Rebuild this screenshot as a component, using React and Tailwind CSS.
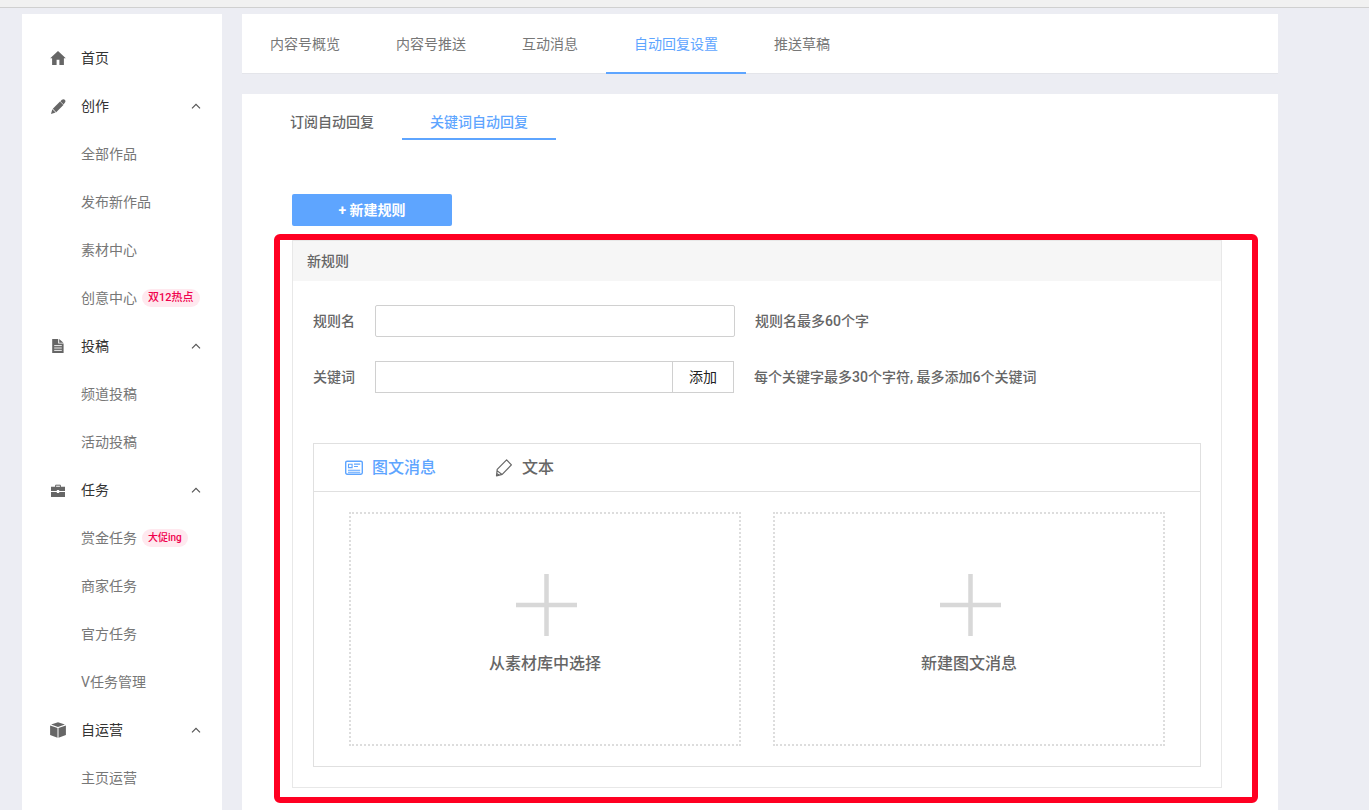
import { useState } from 'react';
import clsx from 'clsx';

const HomeIcon = () => (
  <svg viewBox="0 0 16 16" className="w-4 h-4" fill="currentColor" aria-hidden="true">
    <path d="M8 1.1 0.2 8.3h1.9V15H6.6V9.8h2.8V15h4.5V8.3h1.9L12.6 5.3z" />
  </svg>
);

const PencilIcon = () => (
  <svg viewBox="0 0 16 16" className="w-4 h-4" fill="currentColor" aria-hidden="true">
    <path d="M1 15.9l1.3-4.6 3.3 3.3zM2.8 10.8 10 3.6l3.4 3.4-7.2 7.2zM10.4 3.2l1.5-1.4c1-.9 2-.9 2.9 0s.9 2 0 2.9l-1.3 1.8z" />
  </svg>
);

const DocIcon = () => (
  <svg viewBox="0 0 16 16" className="w-4 h-4" aria-hidden="true">
    <path d="M2.2 1h6v4.6h5.4V15H2.2z" fill="currentColor" />
    <path d="M9.2 1 13.4 4.8H9.2z" fill="currentColor" />
    <path d="M4.2 7.6h7.6M4.2 10h7.6M4.2 12.4h7.6" stroke="#fff" strokeWidth="0.9" />
  </svg>
);

const BriefcaseIcon = () => (
  <svg viewBox="0 0 16 16" className="w-4 h-4" aria-hidden="true">
    <path d="M5.6 5.1V3.2h4.8v1.9" fill="none" stroke="currentColor" strokeWidth="1" />
    <path d="M1 4.7h14v4.4H9.2V8.1H6.8v1H1zM1 10.1h5.8v1h2.4v-1H15v5H1z" fill="currentColor" />
  </svg>
);

const BoxIcon = () => (
  <svg viewBox="0 0 16 16" className="w-4 h-4" fill="currentColor" aria-hidden="true">
    <path d="M8 0.2 14.9 2.6 8 5 1.1 2.6zM0.1 3.6 7.5 6.1V15.8L0.1 13zM15.9 3.6 8.5 6.1V15.8L15.9 13z" />
  </svg>
);

const ChevronUp = () => (
  <svg viewBox="0 0 10 10" className="w-[10px] h-[10px]" fill="none" stroke="#555" strokeWidth="1.2" aria-hidden="true">
    <path d="M1 7.4 5 3.3 9 7.4" />
  </svg>
);

const CardIcon = () => (
  <svg viewBox="0 0 18 16" className="w-[18px] h-4" fill="none" stroke="currentColor" aria-hidden="true">
    <rect x="0.7" y="1.2" width="16.6" height="13" rx="1.4" strokeWidth="1.4" />
    <path d="M3.5 4.3h3.6v3.3H3.5zM9 4.1h6.2M9 6.5h3.9M3 10.2h12.2M3 12.2h12.2" strokeWidth="1.1" />
  </svg>
);

const EditIcon = () => (
  <svg viewBox="0 0 18 18" className="w-[18px] h-[18px]" fill="none" stroke="currentColor" strokeWidth="1.2" strokeLinejoin="round" aria-hidden="true">
    <path d="M11.6 0.8 16.4 5.9 7.2 15.3 1.5 16.9 2.2 10.4zM2 11.6l5 3.9M1.8 14.4l2.4 1.8" />
  </svg>
);

const PlusIcon = () => (
  <svg viewBox="0 0 66 62" className="w-[66px] h-[62px]" stroke="#d8d8d8" strokeWidth="4.5" aria-hidden="true">
    <path d="M4 31h61M34.5 0v62" />
  </svg>
);

const menu = [
  { title: '首页', icon: HomeIcon },
  {
    title: '创作',
    icon: PencilIcon,
    items: [
      { label: '全部作品' },
      { label: '发布新作品' },
      { label: '素材中心' },
      { label: '创意中心', badge: '双12热点', badgeSize: 'text-[11px]' },
    ],
  },
  { title: '投稿', icon: DocIcon, items: [{ label: '频道投稿' }, { label: '活动投稿' }] },
  {
    title: '任务',
    icon: BriefcaseIcon,
    items: [
      { label: '赏金任务', badge: '大促ing', badgeSize: 'text-[10px]' },
      { label: '商家任务' },
      { label: '官方任务' },
      { label: 'V任务管理' },
    ],
  },
  { title: '自运营', icon: BoxIcon, items: [{ label: '主页运营' }] },
];

const tabs = ['内容号概览', '内容号推送', '互动消息', '自动回复设置', '推送草稿'];
const subTabs = ['订阅自动回复', '关键词自动回复'];
const messageTabs = [
  { label: '图文消息', icon: CardIcon },
  { label: '文本', icon: EditIcon },
];

const Sidebar = () => (
  <nav className="w-[200px] shrink-0 bg-white pt-5 text-sm">
    {menu.map((group) => (
      <div key={group.title}>
        <a href="#" className="flex items-center h-12 pl-7 pr-[21px] text-[#333]">
          <span className="text-[#666] mr-[15px]">
            <group.icon />
          </span>
          <span className="flex-1">{group.title}</span>
          {group.items && <ChevronUp />}
        </a>
        {group.items?.map((item) => (
          <a key={item.label} href="#" className="flex items-center h-12 pl-[59px] text-[#777]">
            {item.label}
            {item.badge && (
              <span
                className={clsx(
                  'flex items-center ml-[5px] h-[18px] px-[6px] rounded-full bg-[#ffe9ef] font-medium text-[#f0004c]',
                  item.badgeSize
                )}
              >
                {item.badge}
              </span>
            )}
          </a>
        ))}
      </div>
    ))}
  </nav>
);

const App = () => {
  const [tab, setTab] = useState('自动回复设置');
  const [subTab, setSubTab] = useState('关键词自动回复');
  const [messageTab, setMessageTab] = useState('图文消息');
  const [ruleName, setRuleName] = useState('');
  const [keyword, setKeyword] = useState('');

  return (
    <div className="flex flex-col min-h-screen bg-[#ecedf3] font-[Roboto,'Noto_Sans_CJK_SC',sans-serif] text-sm text-[#666]">
      <div className="h-2 bg-[#f1f1f1] border-b border-[#d0d0d0]" />

      <div className="flex flex-1 gap-5 pt-[6px] pl-[22px] pr-[91px]">
        <Sidebar />

        <main className="flex-1 flex flex-col gap-5 min-w-0">
          {/* Top tabs */}
          <div className="flex h-[60px] bg-white border-b border-[#e4e5ea]">
            {tabs.map((name) => (
              <button
                key={name}
                onClick={() => setTab(name)}
                className={clsx(
                  'px-7 pt-[2px] -mb-px border-b-2',
                  tab === name ? 'border-[#5ea5ff] text-[#5ea5ff]' : 'border-transparent text-[#777]'
                )}
              >
                {name}
              </button>
            ))}
          </div>

          <section className="flex-1 bg-white pt-[10px] pb-[22px] font-medium">
            <div className="flex h-9 px-5">
              {subTabs.map((name) => (
                <button
                  key={name}
                  onClick={() => setSubTab(name)}
                  className={clsx(
                    'px-7 pt-[2px] border-b-2',
                    subTab === name ? 'border-[#5ea5ff] text-[#5ea5ff]' : 'border-transparent'
                  )}
                >
                  {name}
                </button>
              ))}
            </div>

            <div className="pl-[50px] pr-14 pt-[54px]">
              <button className="block w-40 h-8 rounded-xs bg-[#5ea5ff] font-bold text-white">+ 新建规则</button>

              <div className="relative mt-[14px]">
                <div className="border border-[#e8e8e8]">
                  <h2 className="h-10 px-[14px] bg-[#f6f6f6] leading-10 font-medium">新规则</h2>

                  <div className="px-5 pt-6 pb-5">
                    <div className="flex items-center">
                      <label htmlFor="rule-name" className="w-[62px]">规则名</label>
                      <input
                        id="rule-name"
                        value={ruleName}
                        onChange={(e) => setRuleName(e.target.value)}
                        className="w-[360px] h-8 px-2 border border-[#d0d0d0] rounded-xs outline-none"
                      />
                      <span className="ml-5">规则名最多60个字</span>
                    </div>

                    <div className="flex items-center mt-6">
                      <label htmlFor="keyword" className="w-[62px]">关键词</label>
                      <input
                        id="keyword"
                        value={keyword}
                        onChange={(e) => setKeyword(e.target.value)}
                        className="w-[298px] h-8 px-2 border border-[#d0d0d0] outline-none"
                      />
                      <button className="w-[62px] h-8 -ml-px border border-[#d0d0d0] font-normal text-[#222]">添加</button>
                      <span className="ml-5">每个关键字最多30个字符, 最多添加6个关键词</span>
                    </div>

                    {/* Reply content */}
                    <div className="mt-[50px] border border-[#e0e0e0] text-base">
                      <div className="flex gap-[59px] h-12 pt-px px-[31px] border-b border-[#e0e0e0]">
                        {messageTabs.map((item) => (
                          <button
                            key={item.label}
                            onClick={() => setMessageTab(item.label)}
                            className={clsx(
                              'flex items-center gap-[9px]',
                              messageTab === item.label && 'text-[#5ea5ff]'
                            )}
                          >
                            <item.icon />
                            {item.label}
                          </button>
                        ))}
                      </div>

                      <div className="grid grid-cols-2 gap-8 px-[35px] py-5">
                        {['从素材库中选择', '新建图文消息'].map((label) => (
                          <button
                            key={label}
                            className="flex flex-col items-center gap-4 h-[234px] pt-[60px] border-2 border-dotted border-[#ddd]"
                          >
                            <PlusIcon />
                            {label}
                          </button>
                        ))}
                      </div>
                    </div>
                  </div>
                </div>

                {/* Highlight frame */}
                <div className="absolute -left-[18px] -right-9 -top-[6px] -bottom-[15px] border-6 border-[#ff0022] rounded-md pointer-events-none" />
              </div>
            </div>
          </section>
        </main>
      </div>
    </div>
  );
};

export default App;
